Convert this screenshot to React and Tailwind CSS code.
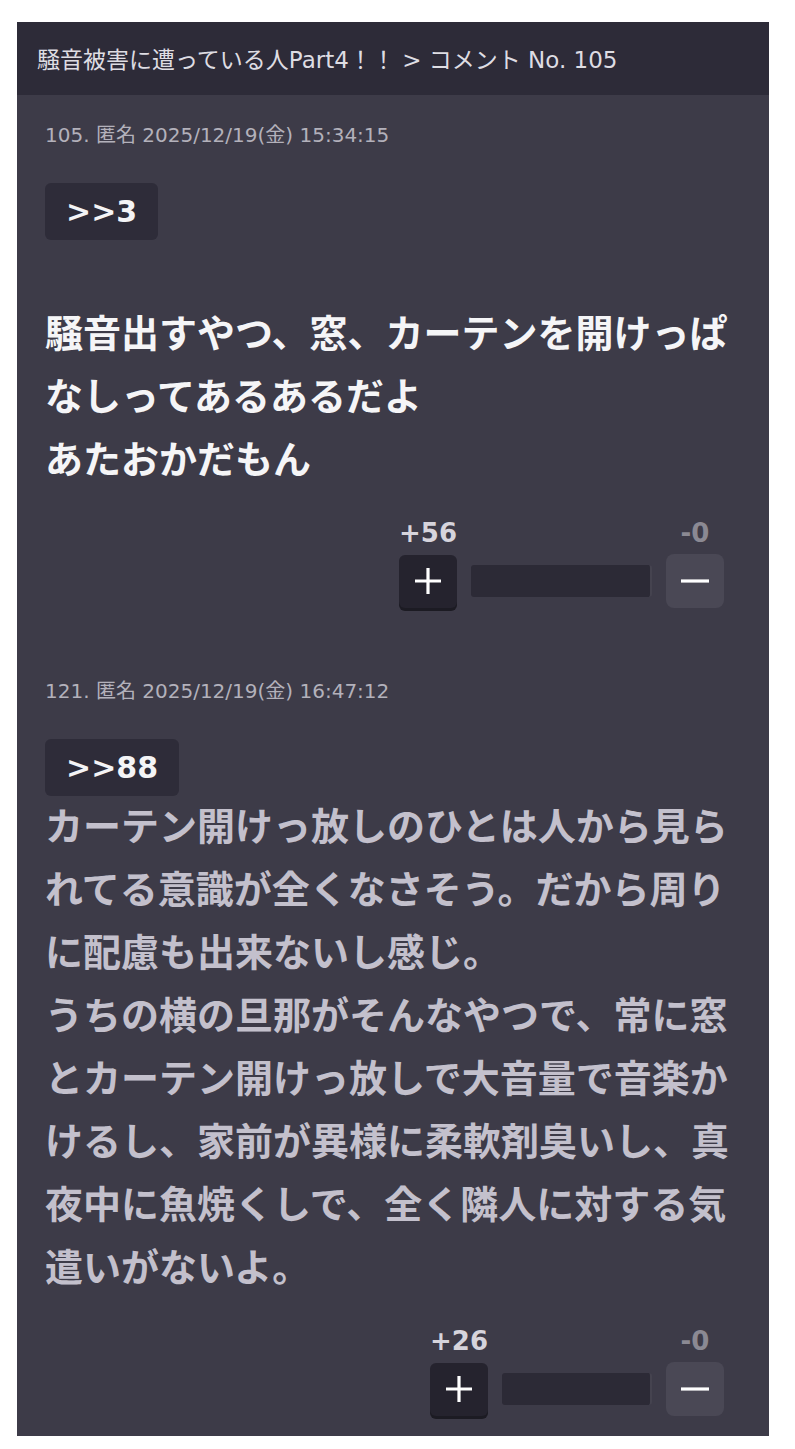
import React from 'react';

const comments = [
  {
    id: 105,
    meta: '105. 匿名 2025/12/19(金) 15:34:15',
    anchor: '>>3',
    lines: ['', '騒音出すやつ、窓、カーテンを開けっぱなしってあるあるだよ', 'あたおかだもん'],
    bright: true,
    plus: 56,
    minus: 0,
    barWidth: 181,
  },
  {
    id: 121,
    meta: '121. 匿名 2025/12/19(金) 16:47:12',
    anchor: '>>88',
    lines: [
      'カーテン開けっ放しのひとは人から見られてる意識が全くなさそう。だから周りに配慮も出来ないし感じ。',
      'うちの横の旦那がそんなやつで、常に窓とカーテン開けっ放しで大音量で音楽かけるし、家前が異様に柔軟剤臭いし、真夜中に魚焼くしで、全く隣人に対する気遣いがないよ。',
    ],
    bright: false,
    plus: 26,
    minus: 0,
    barWidth: 150,
  },
];

const PlusIcon = () => (
  <svg width="28" height="28" viewBox="0 0 28 28">
    <path d="M14 1v26M1 14h26" stroke="#ffffff" strokeWidth="3.2" />
  </svg>
);

const MinusIcon = () => (
  <svg width="28" height="28" viewBox="0 0 28 28">
    <path d="M0 14h28" stroke="#ffffff" strokeWidth="3.2" />
  </svg>
);

const Vote = ({ plus, minus, barWidth }) => (
  <div className="flex justify-end mt-[26px] mr-[17px]">
    <div className="flex flex-col">
      <div className="flex items-end justify-between text-[26px] font-bold leading-[30px]">
        <span className="w-[58px] text-center text-[#d6d4dc]">+{plus}</span>
        <span className="w-[58px] text-center text-[#8b8993]">-{minus}</span>
      </div>
      <div className="flex items-center gap-[14px] mt-[6px]">
        <button className="w-[58px] h-[53px] rounded-[6px] bg-[#25232e] shadow-[0_3px_0_#1c1b23] flex items-center justify-center">
          <PlusIcon />
        </button>
        <div
          className="h-[32px] rounded-[3px] bg-[#2c2a36] border-r-2 border-[#45434f]"
          style={{ width: barWidth }}
        ></div>
        <button className="w-[58px] h-[54px] rounded-[8px] bg-[#4a4855] flex items-center justify-center">
          <MinusIcon />
        </button>
      </div>
    </div>
  </div>
);

const Comment = ({ c, last }) => (
  <div className={`px-7 pt-[27px] ${last ? 'pb-[20px]' : 'pb-[43px]'}`}>
    <div className="text-[20px] leading-[26px] text-[#b3b1bb]">{c.meta}</div>
    <div className="mt-[35px] flex">
      <span className="inline-block px-[21px] py-[11px] rounded-[6px] bg-[#2e2c39] text-[30px] font-bold leading-[35px] text-[#f4f4f6]">
        {c.anchor}
      </span>
    </div>
    <div
      className={`text-[38px] font-bold leading-[63px] ${
        c.bright ? 'text-[#f5f5f7]' : 'text-[#c3c0cc]'
      }`}
    >
      {c.lines.map((line, i) => (
        <p key={i} className="min-h-[63px]">
          {line}
        </p>
      ))}
    </div>
    <Vote plus={c.plus} minus={c.minus} barWidth={c.barWidth} />
  </div>
);

export default function App() {
  return (
    <div
      className="bg-white min-h-[1449px] pt-[22px] pl-[17px]"
      style={{ fontFamily: '"DejaVu Sans", "Noto Sans CJK JP", sans-serif' }}
    >
      <div className="w-[752px] bg-[#3d3b48]">
        <div className="h-[73px] bg-[#2d2b38] flex items-center px-5 pt-[3px] text-[23px] text-[#dedde3]">
          騒音被害に遭っている人Part4！！ &gt; コメント No. 105
        </div>
        {comments.map((c, i) => (
          <Comment key={c.id} c={c} last={i === comments.length - 1} />
        ))}
      </div>
    </div>
  );
}
